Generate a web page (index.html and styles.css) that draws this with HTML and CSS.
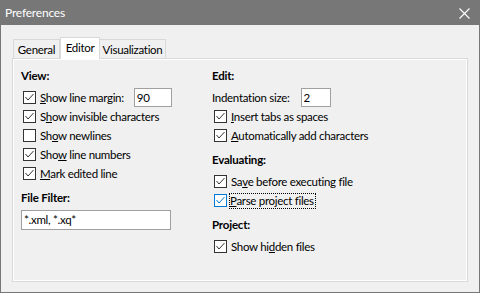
FILE: index.html
```html
<!DOCTYPE html>
<html>
<head>
<meta charset="utf-8">
<link rel="stylesheet" href="styles.css">
</head>
<body>
<div class="window">
  <div class="titlebar">
    <span class="title">Preferences</span>
    <svg class="close" width="11" height="11" viewBox="0 0 11 11"><path d="M0.5 0.5 L10.5 10.5 M10.5 0.5 L0.5 10.5" stroke="#fff" stroke-width="1.1" fill="none"/></svg>
  </div>
  <div class="body">
    <div class="tabs">
      <div class="tab t-general">General</div>
      <div class="tab active t-editor">Editor</div>
      <div class="tab t-vis">Visualization</div>
    </div>
    <div class="panel">
      <div class="col left">
        <div class="section">
          <div class="hdr">View:</div>
          <div class="row cbrow">
            <span class="cb"><svg width="11" height="11" viewBox="0 0 11 11"><path d="M1.5 5 L4 8 L9.5 2" fill="none" stroke="#333" stroke-width="1"/></svg></span>
            <span class="lbl"><u>S</u>how line margin:</span>
            <span class="field f-margin">90</span>
          </div>
          <div class="row cbrow">
            <span class="cb"><svg width="11" height="11" viewBox="0 0 11 11"><path d="M1.5 5 L4 8 L9.5 2" fill="none" stroke="#333" stroke-width="1"/></svg></span>
            <span class="lbl">S<u>h</u>ow invisible characters</span>
          </div>
          <div class="row cbrow">
            <span class="cb"></span>
            <span class="lbl">Sh<u>o</u>w newlines</span>
          </div>
          <div class="row cbrow">
            <span class="cb"><svg width="11" height="11" viewBox="0 0 11 11"><path d="M1.5 5 L4 8 L9.5 2" fill="none" stroke="#333" stroke-width="1"/></svg></span>
            <span class="lbl">Sho<u>w</u> line numbers</span>
          </div>
          <div class="row cbrow">
            <span class="cb"><svg width="11" height="11" viewBox="0 0 11 11"><path d="M1.5 5 L4 8 L9.5 2" fill="none" stroke="#333" stroke-width="1"/></svg></span>
            <span class="lbl"><u>M</u>ark edited line</span>
          </div>
        </div>
        <div class="section">
          <div class="hdr">File Filter:</div>
          <div class="field f-filter">*.xml, *.xq*</div>
        </div>
      </div>
      <div class="col right">
        <div class="section">
          <div class="hdr">Edit:</div>
          <div class="row">
            <span class="lbl">Indentation size:</span>
            <span class="field f-indent">2</span>
          </div>
          <div class="row cbrow">
            <span class="cb"><svg width="11" height="11" viewBox="0 0 11 11"><path d="M1.5 5 L4 8 L9.5 2" fill="none" stroke="#333" stroke-width="1"/></svg></span>
            <span class="lbl"><u>I</u>nsert tabs as spaces</span>
          </div>
          <div class="row cbrow">
            <span class="cb"><svg width="11" height="11" viewBox="0 0 11 11"><path d="M1.5 5 L4 8 L9.5 2" fill="none" stroke="#333" stroke-width="1"/></svg></span>
            <span class="lbl"><u>A</u>utomatically add characters</span>
          </div>
        </div>
        <div class="section">
          <div class="hdr">Evaluating:</div>
          <div class="row cbrow">
            <span class="cb"><svg width="11" height="11" viewBox="0 0 11 11"><path d="M1.5 5 L4 8 L9.5 2" fill="none" stroke="#333" stroke-width="1"/></svg></span>
            <span class="lbl">Sa<u>v</u>e before executing file</span>
          </div>
          <div class="row cbrow">
            <span class="cb focus"><svg width="11" height="11" viewBox="0 0 11 11"><path d="M1.5 5 L4 8 L9.5 2" fill="none" stroke="#0078d7" stroke-width="1"/></svg></span>
            <span class="lbl focused"><u>P</u>arse project files</span>
          </div>
        </div>
        <div class="section">
          <div class="hdr">Project:</div>
          <div class="row cbrow">
            <span class="cb"><svg width="11" height="11" viewBox="0 0 11 11"><path d="M1.5 5 L4 8 L9.5 2" fill="none" stroke="#333" stroke-width="1"/></svg></span>
            <span class="lbl">Show hi<u>d</u>den files</span>
          </div>
        </div>
      </div>
    </div>
  </div>
</div>
</body>
</html>
```

FILE: styles.css
```css
* { box-sizing: border-box; }
html, body { margin: 0; padding: 0; background: #f0f0f0; }
body {
  font-family: "Lato", "Segoe UI", "Noto Sans", sans-serif;
  font-size: 11.5px;
  letter-spacing: -0.3px;
  color: #000;
}
.window {
  width: 480px;
  height: 293px;
  border: 1px solid #777;
  border-top: none;
  display: flex;
  flex-direction: column;
  background: #f0f0f0;
}
.titlebar {
  height: 25px;
  background: #777;
  display: flex;
  align-items: center;
  justify-content: space-between;
  padding: 0 9px 0 4px;
  color: #fff;
  flex: none;
}
.title { font-size: 12px; letter-spacing: -0.2px; }
.close { display: block; margin-top: 1px; }
.body {
  flex: 1;
  display: flex;
  flex-direction: column;
  padding: 12px 11px 10px 11px;
}
.tabs {
  display: flex;
  align-items: flex-end;
  height: 21px;
  padding-left: 1px;
  flex: none;
}
.tab {
  height: 19px;
  border: 1px solid #d9d9d9;
  border-bottom: none;
  background: #f0f0f0;
  display: flex;
  align-items: center;
  justify-content: center;
  padding-top: 1px;
}
.t-general { width: 47px; }
.t-editor { width: 40px; }
.t-vis { width: 66px; border-left: none; }
.tab.active {
  height: 22px;
  margin-bottom: -1px;
  background: #fff;
  position: relative;
  z-index: 1;
  padding-top: 0;
  padding-bottom: 2px;
}
.panel {
  flex: 1;
  border: 1px solid #d9d9d9;
  box-shadow: inset 0 0 0 1px #fff;
  background: #f0f0f0;
  display: grid;
  grid-template-columns: 191px 1fr;
  padding: 9px 8px 0 8px;
  align-content: start;
}
.section + .section { margin-top: 7px; }
.hdr {
  height: 16px;
  line-height: 16px;
  font-weight: bold;
  letter-spacing: -0.2px;
  margin-bottom: 4px;
}
.row {
  height: 19px;
  display: flex;
  align-items: center;
  white-space: nowrap;
}
.cbrow { padding-left: 2px; }
.cb {
  width: 13px;
  height: 13px;
  border: 1px solid #333;
  background: #fff;
  flex: none;
  margin-right: 4px;
  display: flex;
}
.cb svg { display: block; }
.cb.focus { border-color: #0078d7; }
.lbl u { text-decoration: underline; text-underline-offset: 1px; }
.lbl.focused {
  outline: 1px dotted #000;
  outline-offset: 0;
  padding: 0 1px 0 0;
  margin-left: -1px;
  line-height: 14px;
}
.field {
  background: #fff;
  border: 1px solid #a0a0a0;
  height: 19px;
  line-height: 17px;
  padding-left: 2px;
  display: block;
}
.f-margin { width: 38px; margin-left: 10px; }
.f-indent { width: 30px; margin-left: 11px; }
.f-filter { width: 150px; height: 20px; line-height: 18px; margin-top: 0; }
```
